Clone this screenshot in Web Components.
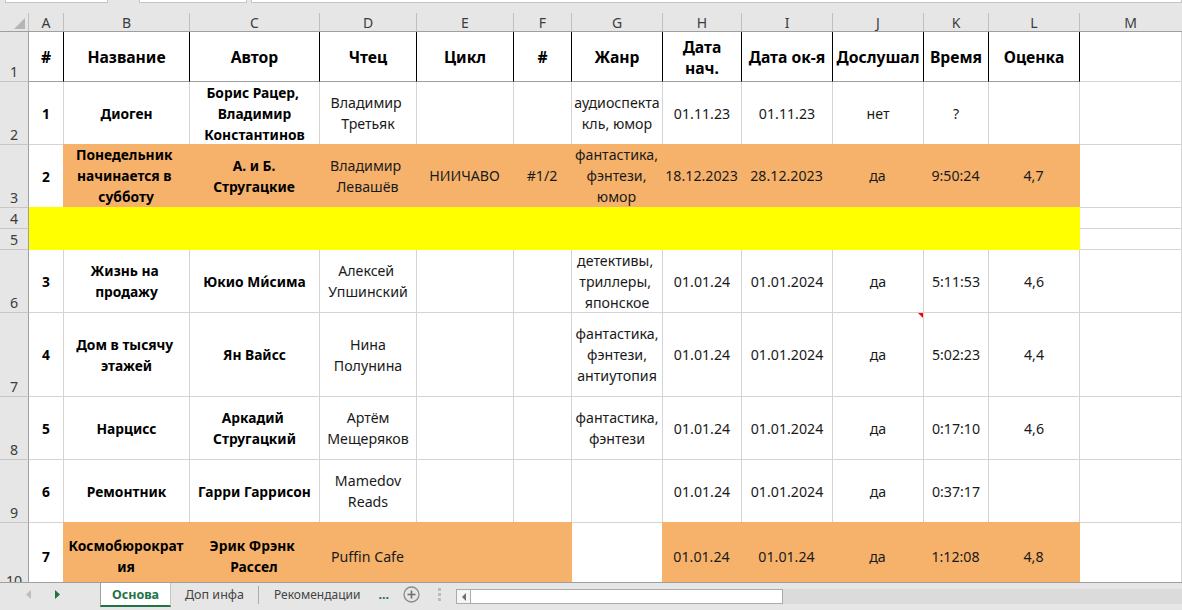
<!DOCTYPE html>
<html lang="ru">
<head>
<meta charset="utf-8">
<title>Книги</title>
<style>
    html, body { margin: 0; padding: 0; background: #e6e6e6; overflow: hidden; }
</style>
</head>
<body>
<xl-app>
    <xl-topstrip></xl-topstrip>
    <xl-columns></xl-columns>
    <xl-grid>
        <xl-row num="1" h="50">
            <xl-cell b head>#</xl-cell><xl-cell b head>Название</xl-cell><xl-cell b head>Автор</xl-cell><xl-cell b head>Чтец</xl-cell>
            <xl-cell b head>Цикл</xl-cell><xl-cell b head>#</xl-cell><xl-cell b head>Жанр</xl-cell><xl-cell b head>Дата<br>нач.</xl-cell>
            <xl-cell b head>Дата ок-я</xl-cell><xl-cell b head>Дослушал</xl-cell><xl-cell b head>Время</xl-cell><xl-cell b head>Оценка</xl-cell><xl-cell></xl-cell>
        </xl-row>
        <xl-row num="2" h="63">
            <xl-cell b>1</xl-cell><xl-cell b>Диоген</xl-cell><xl-cell b>Борис Рацер,&nbsp;<br>Владимир<br>Константинов</xl-cell><xl-cell>Владимир&nbsp;<br>Третьяк</xl-cell>
            <xl-cell></xl-cell><xl-cell></xl-cell><xl-cell>аудиоспекта<br>кль, юмор</xl-cell><xl-cell>01.11.23</xl-cell>
            <xl-cell>01.11.23</xl-cell><xl-cell>нет</xl-cell><xl-cell>?</xl-cell><xl-cell></xl-cell><xl-cell></xl-cell>
        </xl-row>
        <xl-row num="3" h="63">
            <xl-cell b>2</xl-cell><xl-cell b fill="orange">Понедельник&nbsp;<br>начинается в&nbsp;<br>субботу</xl-cell><xl-cell b fill="orange">А. и Б.<br>Стругацкие</xl-cell><xl-cell fill="orange">Владимир&nbsp;<br>Левашёв</xl-cell>
            <xl-cell fill="orange">НИИЧАВО</xl-cell><xl-cell fill="orange">#1/2</xl-cell><xl-cell fill="orange">фантастика,<br>фэнтези,<br>юмор</xl-cell><xl-cell fill="orange">18.12.2023</xl-cell>
            <xl-cell fill="orange">28.12.2023</xl-cell><xl-cell fill="orange">да</xl-cell><xl-cell fill="orange">9:50:24</xl-cell><xl-cell fill="orange">4,7</xl-cell><xl-cell></xl-cell>
        </xl-row>
        <xl-row num="4" h="21"><xl-cell fill="yellow" span="12"></xl-cell><xl-cell></xl-cell></xl-row>
        <xl-row num="5" h="21"><xl-cell fill="yellow" span="12"></xl-cell><xl-cell></xl-cell></xl-row>
        <xl-row num="6" h="63">
            <xl-cell b>3</xl-cell><xl-cell b>Жизнь на&nbsp;<br>продажу</xl-cell><xl-cell b>Юкио Ми́сима</xl-cell><xl-cell>Алексей&nbsp;<br>Упшинский</xl-cell>
            <xl-cell></xl-cell><xl-cell></xl-cell><xl-cell>детективы,&nbsp;<br>триллеры,&nbsp;<br>японское</xl-cell><xl-cell>01.01.24</xl-cell>
            <xl-cell>01.01.2024</xl-cell><xl-cell>да</xl-cell><xl-cell>5:11:53</xl-cell><xl-cell>4,6</xl-cell><xl-cell></xl-cell>
        </xl-row>
        <xl-row num="7" h="84">
            <xl-cell b>4</xl-cell><xl-cell b>Дом в тысячу&nbsp;<br>этажей</xl-cell><xl-cell b>Ян Вайсс</xl-cell><xl-cell>Нина<br>Полунина</xl-cell>
            <xl-cell></xl-cell><xl-cell></xl-cell><xl-cell>фантастика,<br>фэнтези,<br>антиутопия</xl-cell><xl-cell>01.01.24</xl-cell>
            <xl-cell>01.01.2024</xl-cell><xl-cell note>да</xl-cell><xl-cell>5:02:23</xl-cell><xl-cell>4,4</xl-cell><xl-cell></xl-cell>
        </xl-row>
        <xl-row num="8" h="63">
            <xl-cell b>5</xl-cell><xl-cell b>Нарцисс</xl-cell><xl-cell b>Аркадий&nbsp;<br>Стругацкий</xl-cell><xl-cell>Артём<br>Мещеряков</xl-cell>
            <xl-cell></xl-cell><xl-cell></xl-cell><xl-cell>фантастика,<br>фэнтези</xl-cell><xl-cell>01.01.24</xl-cell>
            <xl-cell>01.01.2024</xl-cell><xl-cell>да</xl-cell><xl-cell>0:17:10</xl-cell><xl-cell>4,6</xl-cell><xl-cell></xl-cell>
        </xl-row>
        <xl-row num="9" h="63">
            <xl-cell b>6</xl-cell><xl-cell b>Ремонтник</xl-cell><xl-cell b>Гарри Гаррисон</xl-cell><xl-cell>Mamedov<br>Reads</xl-cell>
            <xl-cell></xl-cell><xl-cell></xl-cell><xl-cell></xl-cell><xl-cell>01.01.24</xl-cell>
            <xl-cell>01.01.2024</xl-cell><xl-cell>да</xl-cell><xl-cell>0:37:17</xl-cell><xl-cell></xl-cell><xl-cell></xl-cell>
        </xl-row>
        <xl-row num="10" h="68">
            <xl-cell b>7</xl-cell><xl-cell b fill="orange">Космобюрократ<br>ия</xl-cell><xl-cell b fill="orange">Эрик Фрэнк&nbsp;<br>Рассел</xl-cell><xl-cell fill="orange">Puffin Cafe</xl-cell>
            <xl-cell fill="orange"></xl-cell><xl-cell fill="orange"></xl-cell><xl-cell></xl-cell><xl-cell fill="orange">01.01.24</xl-cell>
            <xl-cell fill="orange">01.01.24</xl-cell><xl-cell fill="orange">да</xl-cell><xl-cell fill="orange">1:12:08</xl-cell><xl-cell fill="orange">4,8</xl-cell><xl-cell></xl-cell>
        </xl-row>
    </xl-grid>
    <xl-tabs></xl-tabs>
</xl-app>

<script>
const COLS = '29px 35px 126px 130px 97px 97px 58px 91px 79px 91px 91px 65px 91px 102px';
const LETTERS = ['A', 'B', 'C', 'D', 'E', 'F', 'G', 'H', 'I', 'J', 'K', 'L', 'M'];

// small helper, every element here is just a shadow root with fixed markup
class Base extends HTMLElement {
    constructor() {
        super();
        this.attachShadow({ mode: 'open' });
    }
}

class XlApp extends Base {
    connectedCallback() {
        this.shadowRoot.innerHTML = `
        <style>
            :host {
                display: flex;
                flex-direction: column;
                width: 1182px;
                height: 610px;
                overflow: hidden;
                background: #e6e6e6;
                color: #1a1a1a;
                font-family: "Noto Sans", sans-serif;
                font-size: 14.2px;
                --cols: ${COLS};
            }
        </style>
        <slot></slot>
        `;
    }
}

class XlTopstrip extends Base {
    connectedCallback() {
        this.shadowRoot.innerHTML = `
        <style>
            :host {
                display: flex;
                flex: none;
                height: 13px;
                gap: 4px;
                padding-left: 5px;
                box-sizing: border-box;
            }
            div {
                height: 2px;
                background: #fff;
                border: 1px solid #c6c6c6;
                border-top: 0;
            }
            .name { width: 101px; margin-right: 27px; }
            .fx { width: 106px; }
            .bar { width: 929px; }
        </style>
        <div class="name"></div><div class="fx"></div><div class="bar"></div>
        `;
    }
}

class XlColumns extends Base {
    connectedCallback() {
        const letters = LETTERS.map(l => `<span>${l}</span>`).join('');
        this.shadowRoot.innerHTML = `
        <style>
            :host {
                display: grid;
                flex: none;
                grid-template-columns: var(--cols);
                height: 19px;
                box-sizing: border-box;
                border-bottom: 1px solid #9f9f9f;
                color: #3c3c3c;
                font-size: 14px;
            }
            span {
                display: flex;
                align-items: center;
                justify-content: center;
                border-right: 1px solid #c0c0c0;
                line-height: 1;
                padding-top: 1px;
            }
            span:last-child { border-right-color: #e6e6e6; }
            .corner { position: relative; border-right: 1px solid #c0c0c0; }
            svg { position: absolute; left: 14px; top: 5px; }
        </style>
        <span class="corner"><svg width="12" height="11" viewBox="0 0 12 11"><path d="M11 0v11H0z" fill="#b5b5b5"/></svg></span>${letters}
        `;
    }
}

class XlGrid extends Base {
    connectedCallback() {
        this.shadowRoot.innerHTML = `
        <style>
            :host {
                display: block;
                flex: none;
                height: 550px;
                overflow: hidden;
                background: #fff;
            }
        </style>
        <slot></slot>
        `;
    }
}

class XlRow extends Base {
    connectedCallback() {
        const h = this.getAttribute('h') || '21';
        this.shadowRoot.innerHTML = `
        <style>
            :host {
                display: grid;
                grid-template-columns: var(--cols);
                grid-template-rows: minmax(0, 1fr);
                height: ${h}px;
            }
            .num {
                display: flex;
                align-items: flex-end;
                justify-content: center;
                box-sizing: border-box;
                background: #e6e6e6;
                border-right: 1px solid #9f9f9f;
                border-bottom: 1px solid #c6c6c6;
                color: #3c3c3c;
                line-height: 19px;
                overflow: hidden;
            }
        </style>
        <div class="num">${this.getAttribute('num')}</div><slot></slot>
        `;
    }
}

class XlCell extends Base {
    connectedCallback() {
        const span = this.getAttribute('span');
        this.shadowRoot.innerHTML = `
        <style>
            :host {
                display: flex;
                align-items: center;
                justify-content: center;
                position: relative;
                box-sizing: border-box;
                min-width: 0;
                ${span ? `grid-column: span ${span};` : ''}
                border-right: 1px solid #d4d4d4;
                border-bottom: 1px solid #d4d4d4;
                background: #fff;
                text-align: center;
                white-space: nowrap;
                line-height: 21px;
            }
            :host([b]) { font-size: 13.8px; font-weight: 700; color: #000; }
            :host([head]) { padding-top: 2px; font-size: 15.7px; border-right-color: #000; border-bottom-color: #9f9f9f; }
            :host([fill]) { margin: -1px 0 0 -1px; border-color: transparent; }
            :host([fill="orange"]) { background: #f6b26b; }
            :host([fill="yellow"]) { margin-left: 0; background: #ffff00; }
            .note {
                display: none;
                position: absolute;
                top: 0;
                right: 0;
                width: 0;
                height: 0;
                border-top: 5px solid #ff0000;
                border-left: 5px solid transparent;
            }
            :host([note]) .note { display: block; }
        </style>
        <div><slot></slot></div><i class="note"></i>
        `;
    }
}

class XlTabs extends Base {
    connectedCallback() {
        this.shadowRoot.innerHTML = `
        <style>
            :host {
                display: flex;
                align-items: flex-start;
                flex: none;
                height: 28px;
                box-sizing: border-box;
                border-top: 1px solid #9f9f9f;
                background: #e6e6e6;
                color: #444;
                font-size: 12.5px;
                line-height: 23px;
            }
            .nav {
                display: flex;
                align-items: center;
                gap: 24px;
                width: 100px;
                height: 23px;
                padding-left: 26px;
                box-sizing: border-box;
            }
            .tab { white-space: nowrap; }
            .active {
                width: 71px;
                height: 24px;
                box-sizing: border-box;
                text-align: center;
                background: #fff;
                border-left: 1px solid #9f9f9f;
                border-right: 1px solid #c6c6c6;
                border-bottom: 2px solid #217346;
                color: #217346;
                font-weight: 700;
                margin-right: 14px;
            }
            .sep { width: 1px; height: 18px; margin: 3px 15px 3px 14px; background: #ababab; }
            .rec { font-size: 12px; }
            .more { margin-left: 18px; width: 25px; color: #217346; font-weight: 700; }
            .plus { margin: 3px 0 0 0; }
            .grip { margin: 5px 0 0 18px; }
            .hbar {
                display: flex;
                flex: 1;
                height: 15px;
                margin: 6px 0 0 15px;
                background: #dbdbdb;
            }
            .arrow {
                display: flex;
                align-items: center;
                justify-content: center;
                width: 15px;
                box-sizing: border-box;
                background: #f6f6f6;
                border: 1px solid #ababab;
            }
            .thumb {
                width: 312px;
                box-sizing: border-box;
                background: #fff;
                border: 1px solid #ababab;
                border-left: 0;
            }
        </style>
        <div class="nav">
            <svg width="5" height="9" viewBox="0 0 5 9"><path d="M5 0v9L0 4.500z" fill="#bdbdbd"/></svg>
            <svg width="5" height="9" viewBox="0 0 5 9"><path d="M0 0v9l5-4.500z" fill="#217346"/></svg>
        </div>
        <div class="tab active">Основа</div>
        <div class="tab">Доп инфа</div>
        <div class="sep"></div>
        <div class="tab rec">Рекомендации</div>
        <div class="tab more">...</div>
        <svg class="plus" width="17" height="17" viewBox="0 0 17 17" fill="none" stroke="#8a8a8a">
            <circle cx="8.500" cy="8.500" r="7.500" stroke-width="1.300"/>
            <path d="M8.500 4.500v8M4.500 8.500h8" stroke="#6e6e6e" stroke-width="1.600"/>
        </svg>
        <svg class="grip" width="3" height="13" viewBox="0 0 3 13"><path d="M0 0h3v3H0zM0 5h3v3H0zM0 10h3v3H0z" fill="#bcbcbc"/></svg>
        <div class="hbar">
            <div class="arrow"><svg width="4" height="8" viewBox="0 0 4 8"><path d="M4 0v8L0 4z" fill="#6e6e6e"/></svg></div>
            <div class="thumb"></div>
        </div>
        `;
    }
}

customElements.define('xl-app', XlApp);
customElements.define('xl-topstrip', XlTopstrip);
customElements.define('xl-columns', XlColumns);
customElements.define('xl-grid', XlGrid);
customElements.define('xl-row', XlRow);
customElements.define('xl-cell', XlCell);
customElements.define('xl-tabs', XlTabs);
</script>
</body>
</html>
